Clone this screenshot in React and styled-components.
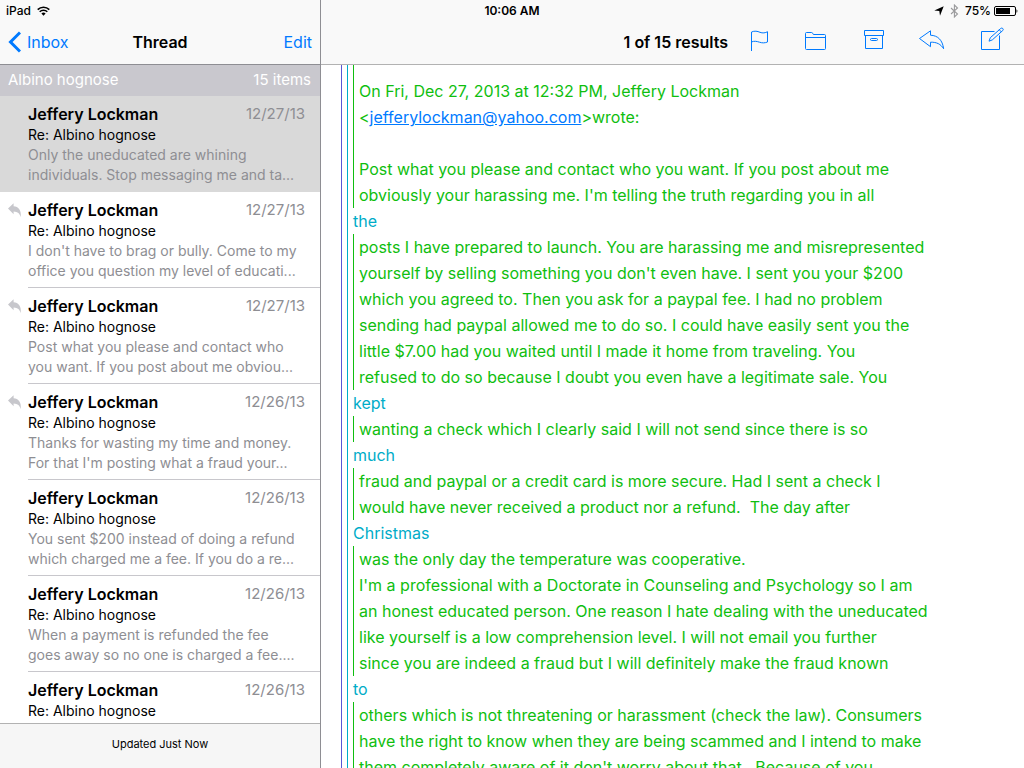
import React from "react";
import styled, { createGlobalStyle } from "styled-components";

const GlobalStyle = createGlobalStyle`
  *, *::before, *::after { box-sizing: border-box; }
  body {
    margin: 0;
    overflow: hidden;
    background: #fff;
    color: #000;
    font-family: Inter, "Liberation Sans", sans-serif;
    font-size: 16px;
  }
  h1, h2, h3, p, ul, blockquote { margin: 0; padding: 0; }
`;

const BLUE = "#007aff";

const Screen = styled.div`
  display: grid;
  grid-template-columns: 321px minmax(0, 1fr);
  grid-template-rows: 20px minmax(0, 1fr);
  height: 100vh;
`;

const StatusBar = styled.header`
  grid-column: 1 / -1;
  grid-row: 1;
  z-index: 1;
  display: grid;
  grid-template-columns: 1fr auto 1fr;
  align-items: center;
  padding: 2px 6px 0;
  font-size: 12px;
  line-height: 18px;
  font-weight: 500;
`;

const StatusGroup = styled.div`
  display: flex;
  align-items: center;
  justify-content: ${(p) => (p.$end ? "flex-end" : "flex-start")};
  gap: 6px;
  svg { display: block; }
`;

const BatteryLevel = styled.span`
  display: flex;
  align-items: center;
  gap: 3px;
`;

const StatusTime = styled.time`
  font-weight: 600;
`;

const Sidebar = styled.aside`
  grid-column: 1;
  grid-row: 1 / -1;
  display: flex;
  flex-direction: column;
  min-height: 0;
  border-right: 1px solid #8e8e93;
`;

const Main = styled.main`
  grid-column: 2;
  grid-row: 1 / -1;
  display: flex;
  flex-direction: column;
  min-height: 0;
`;

const NavBar = styled.div`
  flex: none;
  height: 65px;
  padding: 20px 8px 0;
  background: #f9f9f9;
  border-bottom: 1px solid ${(p) => p.$line};
  display: grid;
  grid-template-columns: 1fr auto 1fr;
  align-items: center;
`;

const Toolbar = styled(NavBar)`
  display: flex;
  justify-content: flex-end;
  padding-right: 16px;
`;

const NavTitle = styled.h1`
  font-size: 16px;
  line-height: 22px;
  font-weight: 600;
`;

const ResultTitle = styled(NavTitle)`
  margin-right: 16px;
`;

const TextButton = styled.button`
  display: flex;
  align-items: center;
  gap: 6px;
  justify-self: ${(p) => (p.$end ? "end" : "start")};
  padding: 0;
  border: 0;
  background: none;
  color: ${BLUE};
  font: inherit;
  line-height: 22px;
  cursor: pointer;
`;

const ToolbarActions = styled.div`
  display: flex;
  gap: 26px;
`;

const IconButton = styled.button`
  width: 32px;
  height: 44px;
  padding: 0;
  border: 0;
  background: none;
  color: ${BLUE};
  cursor: pointer;
  svg { display: block; }
`;

const SectionHeader = styled.div`
  flex: none;
  display: flex;
  justify-content: space-between;
  align-items: center;
  height: 31px;
  padding: 0 9px 2px 8px;
  background: #c9c8ce;
  color: #fff;
  h2 { font: inherit; }
  font-size: 15px;
`;

const MessageList = styled.ul`
  flex: 1;
  min-height: 0;
  overflow: hidden;
  list-style: none;
`;

const MessageRow = styled.li`
  display: grid;
  grid-template-columns: 28px minmax(0, 1fr);
  height: 96px;
  background: ${(p) => (p.$selected ? "#d9d9d9" : "#fff")};
`;

const ReplyMark = styled.div`
  padding: 11px 0 0 8px;
  svg { display: block; }
`;

const MessageBody = styled.div`
  padding: 7px 15px 0 0;
  border-bottom: 1px solid ${(p) => (p.$selected ? "#d9d9d9" : "#c8c7cc")};
`;

const MessageTop = styled.div`
  display: flex;
  justify-content: space-between;
  line-height: 22px;
`;

const Sender = styled.h3`
  font-size: 16px;
  font-weight: 600;
`;

const DateLabel = styled.time`
  font-size: 15px;
  color: #8e8e93;
`;

const Subject = styled.p`
  font-size: 14px;
  line-height: 20px;
`;

const Preview = styled.p`
  font-size: 14px;
  line-height: 20px;
  color: #8e8e93;
  white-space: nowrap;
`;

const Footer = styled.footer`
  flex: none;
  height: 45px;
  display: flex;
  align-items: center;
  justify-content: center;
  padding-bottom: 4px;
  background: #f6f6f6;
  border-top: 1px solid #b2b2b2;
  font-size: 11px;
`;

const MailBody = styled.article`
  flex: 1;
  min-height: 0;
  overflow: hidden;
  padding-left: 20px;
  font-size: 16px;
  line-height: 26px;
  white-space: pre;
`;

const Quote = styled.blockquote`
  border-left: 1px solid currentColor;
  padding-left: 5px;
  color: ${(p) => p.$color};
`;

const FirstQuote = styled(Quote)`
  padding-top: 13px;
`;

const MailLink = styled.a`
  color: ${BLUE};
  text-decoration: underline;
`;

const Line = styled.p`
  min-height: 26px;
`;

const PURPLE = "#5856d6";
const TEAL = "#00acc8";
const GREEN = "#0fbe0f";

const WifiIcon = () => (
  <svg width="13" height="10" viewBox="0 0 13 10" fill="none" stroke="#000" strokeWidth="1.6" aria-hidden="true">
    <path d="M.7 3.6a8.4 8.4 0 0 1 11.6 0M2.7 5.8a5.4 5.4 0 0 1 7.6 0" />
    <path d="M4.4 7.6a3 3 0 0 1 4.2 0L6.5 9.8z" fill="#000" stroke="none" />
  </svg>
);

const LocationIcon = () => (
  <svg width="10" height="10" viewBox="0 0 10 10" aria-hidden="true">
    <path d="M9.7.3 6 9.8 5.300 5 .3 4.500z" />
  </svg>
);

const BluetoothIcon = () => (
  <svg width="9" height="14" viewBox="0 0 9 14" fill="none" stroke="#9a9a9c" strokeWidth="1.1" aria-hidden="true">
    <path d="M1 4l6.5 6L4.4 13V1l3.1 3L1 10" />
  </svg>
);

const BatteryIcon = () => (
  <svg width="24" height="10" viewBox="0 0 24 10" aria-hidden="true">
    <rect x=".5" y=".5" width="21" height="9" rx="1.5" fill="none" stroke="#000" />
    <rect x="2" y="2" width="14" height="6" />
    <path d="M22.5 3.2c1.2.5 1.2 3.1 0 3.6z" />
  </svg>
);

const BackIcon = () => (
  <svg width="13" height="22" viewBox="0 0 13 22" fill="none" stroke={BLUE} strokeWidth="3" aria-hidden="true">
    <path d="M12 1.5 2.5 11l9.5 9.5" />
  </svg>
);

const RepliedIcon = () => (
  <svg width="14" height="15" viewBox="0 0 14 15" fill="#c7c7cc" aria-hidden="true">
    <path d="M0 5.4 5.6.2v3.1c4.8.2 8 4 7.1 10.9-.7-3.4-3-5.6-7.1-5.7v2.7z" />
  </svg>
);

const ACTIONS = [
  {
    label: "Flag",
    art: <path d="M7.5 31V12c3-1.4 6-.8 8.500 .3s5.500 .6 7.500-.6V22c-2.500 1-5 1.200-8 .2s-5.500-1.400-8-.2" />,
  },
  {
    label: "Move to folder",
    art: <path d="M3.500 28.500V13.500q0-1 1-1h5q1 0 1.200 1t1.300 1h10.500q1 0 1 1v13q0 1-1 1h-18q-1 0-1-1zM3.500 17.500h20" />,
  },
  {
    label: "Archive",
    art: <path d="M4.500 10.500h19v5h-19zM5.500 15.500v13h17v-13M11.500 18.500h5q1 0 1 1t-1 1h-5q-1 0-1-1t1-1z" />,
  },
  {
    label: "Reply",
    art: <path d="M1.500 18.500 12.500 10.800v4.400c7.500.3 12 5 13.100 13.500-2.800-4.600-7-6.700-13.100-6.500v4.500z" />,
  },
  {
    label: "Compose",
    art: (
      <>
        <path d="M18.500 11.500h-13v18h18V15.500" />
        <path d="M13 21.200l1.300-3.500L24.700 8.500q1.200-1 2.100 0t0 2L16.300 19.900zM23.200 9.700l2.300 2.300" />
      </>
    ),
  },
];

const MESSAGES = [
  { date: "12/27/13", selected: true, lines: ["Only the uneducated are whining", "individuals. Stop messaging me and ta..."] },
  { date: "12/27/13", replied: true, lines: ["I don't have to brag or bully. Come to my", "office you question my level of educati..."] },
  { date: "12/27/13", replied: true, lines: ["Post what you please and contact who", "you want. If you post about me obviou..."] },
  { date: "12/26/13", replied: true, lines: ["Thanks for wasting my time and money.", "For that I'm posting what a fraud your..."] },
  { date: "12/26/13", lines: ["You sent $200 instead of doing a refund", "which charged me a fee. If you do a re..."] },
  { date: "12/26/13", lines: ["When a payment is refunded the fee", "goes away so no one is charged a fee...."] },
  { date: "12/26/13", lines: [] },
];

const PASSAGES = [
  {
    word: "the",
    lines: [
      "posts I have prepared to launch. You are harassing me and misrepresented",
      "yourself by selling something you don't even have. I sent you your $200",
      "which you agreed to. Then you ask for a paypal fee. I had no problem",
      "sending had paypal allowed me to do so. I could have easily sent you the",
      "little $7.00 had you waited until I made it home from traveling. You",
      "refused to do so because I doubt you even have a legitimate sale. You",
    ],
  },
  { word: "kept", lines: ["wanting a check which I clearly said I will not send since there is so"] },
  {
    word: "much",
    lines: [
      "fraud and paypal or a credit card is more secure. Had I sent a check I",
      "would have never received a product nor a refund.  The day after",
    ],
  },
  {
    word: "Christmas",
    lines: [
      "was the only day the temperature was cooperative.",
      "I'm a professional with a Doctorate in Counseling and Psychology so I am",
      "an honest educated person. One reason I hate dealing with the uneducated",
      "like yourself is a low comprehension level. I will not email you further",
      "since you are indeed a fraud but I will definitely make the fraud known",
    ],
  },
  {
    word: "to",
    lines: [
      "others which is not threatening or harassment (check the law). Consumers",
      "have the right to know when they are being scammed and I intend to make",
      "them completely aware of it don't worry about that.  Because of you",
    ],
  },
];

export default function App() {
  return (
    <>
      <GlobalStyle />
      <Screen>
        <StatusBar>
          <StatusGroup>
            iPad <WifiIcon />
          </StatusGroup>
          <StatusTime>10:06 AM</StatusTime>
          <StatusGroup $end>
            <LocationIcon />
            <BluetoothIcon />
            <BatteryLevel>
              75%
              <BatteryIcon />
            </BatteryLevel>
          </StatusGroup>
        </StatusBar>

        <Sidebar>
          <NavBar $line="#8e8e93">
            <TextButton type="button">
              <BackIcon />
              Inbox
            </TextButton>
            <NavTitle>Thread</NavTitle>
            <TextButton type="button" $end>
              Edit
            </TextButton>
          </NavBar>
          <SectionHeader>
            <h2>Albino hognose</h2>
            <span>15 items</span>
          </SectionHeader>
          <MessageList>
            {MESSAGES.map((m, i) => (
              <MessageRow key={i} $selected={m.selected}>
                <ReplyMark>{m.replied && <RepliedIcon />}</ReplyMark>
                <MessageBody $selected={m.selected}>
                  <MessageTop>
                    <Sender>Jeffery Lockman</Sender>
                    <DateLabel>{m.date}</DateLabel>
                  </MessageTop>
                  <Subject>Re: Albino hognose</Subject>
                  {m.lines.map((line) => (
                    <Preview key={line}>{line}</Preview>
                  ))}
                </MessageBody>
              </MessageRow>
            ))}
          </MessageList>
          <Footer>Updated Just Now</Footer>
        </Sidebar>

        <Main>
          <Toolbar $line="#b2b2b2">
            <ResultTitle>1 of 15 results</ResultTitle>
            <ToolbarActions>
              {ACTIONS.map(({ label, art }) => (
                <IconButton key={label} type="button" aria-label={label}>
                  <svg width="32" height="44" viewBox="0 0 32 44" fill="none" stroke="currentColor" strokeWidth="1">
                    {art}
                  </svg>
                </IconButton>
              ))}
            </ToolbarActions>
          </Toolbar>
          <MailBody>
            <Quote $color={PURPLE}>
              <Quote $color={TEAL}>
                <FirstQuote $color={GREEN}>
                  <Line>On Fri, Dec 27, 2013 at 12:32 PM, Jeffery Lockman</Line>
                  <Line>
                    &lt;<MailLink href="mailto:jefferylockman@yahoo.com">jefferylockman@yahoo.com</MailLink>&gt;wrote:
                  </Line>
                  <Line />
                  <Line>Post what you please and contact who you want. If you post about me</Line>
                  <Line>obviously your harassing me. I'm telling the truth regarding you in all</Line>
                </FirstQuote>
                {PASSAGES.map(({ word, lines }) => (
                  <React.Fragment key={word}>
                    <Line>{word}</Line>
                    <Quote $color={GREEN}>
                      {lines.map((line) => (
                        <Line key={line}>{line}</Line>
                      ))}
                    </Quote>
                  </React.Fragment>
                ))}
              </Quote>
            </Quote>
          </MailBody>
        </Main>
      </Screen>
    </>
  );
}
